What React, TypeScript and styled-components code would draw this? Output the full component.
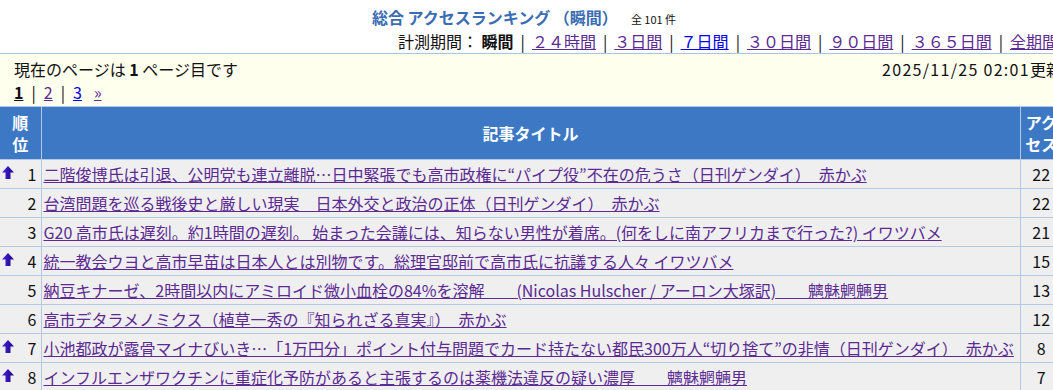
import React from "react";
import styled, { createGlobalStyle } from "styled-components";

const GlobalStyle = createGlobalStyle`
  html, body {
    margin: 0;
    padding: 0;
    background: #ffffff;
    overflow: hidden;
  }
  body {
    font-family: "Noto Sans CJK JP", "Noto Sans", sans-serif;
    font-size: 16px;
    color: #111111;
  }
  a { text-decoration: underline; }
`;

const Page = styled.div`
  width: 1062px;
`;

const TitleRow = styled.div`
  padding-top: 4px;
  height: 26px;
  line-height: 26px;
  text-align: center;
  padding-right: 14px;
`;

const Title = styled.span`
  font-weight: bold;
  font-size: 16px;
  color: #3b6db4;
`;

const Count = styled.span`
  font-size: 11px;
  margin-left: 13px;
  color: #111;
`;

const PeriodRow = styled.div`
  height: 23px;
  line-height: 23px;
  text-align: right;
  padding-right: 4px;
  white-space: nowrap;
`;

const Strong = styled.b`
  font-weight: bold;
`;

const Sep = styled.span`
  margin: 0 7px;
`;

const Link = styled.a<{ $visited?: boolean }>`
  color: ${(p) => (p.$visited ? "#5b2a92" : "#0000ee")};
  white-space: nowrap;
`;

const InfoBox = styled.div`
  border-top: 1px solid #a9c3e2;
  background: #ffffee;
  padding: 4px 0 2px 14px;
`;

const InfoLine = styled.div`
  display: flex;
  justify-content: space-between;
  height: 23px;
  line-height: 23px;
  white-space: nowrap;
`;

const Stamp = styled.span`
  letter-spacing: 1.3px;
`;

const Pager = styled.div`
  height: 23px;
  line-height: 23px;
  display: flex;
  align-items: center;
  gap: 8px;
`;

const Current = styled.a`
  color: #111;
  font-weight: bold;
`;

const Next = styled(Link)`
  margin-left: 4px;
`;

const Table = styled.table`
  width: 100%;
  border-collapse: collapse;
  table-layout: fixed;
`;

const Th = styled.th`
  background: #3c78c4;
  color: #ffffff;
  font-weight: bold;
  font-size: 16px;
  line-height: 22px;
  height: 53px;
  padding: 0 2px;
  border-top: 1px solid #b3c9e3;
  border-left: 1px solid #b3c9e3;
  text-align: center;
  box-sizing: border-box;
  &:first-child { border-left: none; }
`;

const Td = styled.td<{ $align?: string }>`
  background: #efefef;
  height: 28px;
  padding: 0 2px;
  border-top: 1px solid #b3c9e3;
  border-left: 1px solid #b3c9e3;
  text-align: ${(p) => p.$align || "left"};
  white-space: nowrap;
  overflow: hidden;
  box-sizing: content-box;
  line-height: 28px;
  &:first-child { border-left: none; }
`;

const RankCell = styled.div`
  display: flex;
  justify-content: space-between;
  align-items: center;
  padding-right: 2px;
`;

const ArrowBox = styled.span`
  display: inline-flex;
  width: 12px;
  height: 28px;
  align-items: flex-start;
  padding-top: 6px;
  box-sizing: border-box;
`;

const UpArrow = () => (
  <svg width="12" height="13" viewBox="0 0 12 13">
    <defs>
      <linearGradient id="ag" x1="0" y1="0" x2="1" y2="0">
        <stop offset="0" stopColor="#4a22e0" />
        <stop offset="1" stopColor="#1a0680" />
      </linearGradient>
    </defs>
    <path d="M6 0 L12 6.5 H8.5 V13 H3.5 V6.5 H0 Z" fill="url(#ag)" />
  </svg>
);

type Row = { rank: number; up: boolean; title: string; count: number };

const rows: Row[] = [
  { rank: 1, up: true, title: "二階俊博氏は引退、公明党も連立離脱…日中緊張でも高市政権に“パイプ役”不在の危うさ（日刊ゲンダイ）　赤かぶ", count: 22 },
  { rank: 2, up: false, title: "台湾問題を巡る戦後史と厳しい現実　日本外交と政治の正体（日刊ゲンダイ）　赤かぶ", count: 22 },
  { rank: 3, up: false, title: "G20 高市氏は遅刻。約1時間の遅刻。 始まった会議には、知らない男性が着席。(何をしに南アフリカまで行った?) イワツバメ", count: 21 },
  { rank: 4, up: true, title: "統一教会ウヨと高市早苗は日本人とは別物です。総理官邸前で高市氏に抗議する人々 イワツバメ", count: 15 },
  { rank: 5, up: false, title: "納豆キナーゼ、2時間以内にアミロイド微小血栓の84%を溶解　　(Nicolas Hulscher / アーロン大塚訳)　　魑魅魍魎男", count: 13 },
  { rank: 6, up: false, title: "高市デタラメノミクス（植草一秀の『知られざる真実』）　赤かぶ", count: 12 },
  { rank: 7, up: true, title: "小池都政が露骨マイナびいき…「1万円分」ポイント付与問題でカード持たない都民300万人“切り捨て”の非情（日刊ゲンダイ）　赤かぶ", count: 8 },
  { rank: 8, up: true, title: "インフルエンザワクチンに重症化予防があると主張するのは薬機法違反の疑い濃厚　　魑魅魍魎男", count: 7 },
];

const periods: { label: string; visited: boolean }[] = [
  { label: "２４時間", visited: true },
  { label: "３日間", visited: true },
  { label: "７日間", visited: false },
  { label: "３０日間", visited: true },
  { label: "９０日間", visited: true },
  { label: "３６５日間", visited: true },
  { label: "全期間", visited: true },
];

export default function App() {
  return (
    <Page>
      <GlobalStyle />
      <TitleRow>
        <Title>総合 アクセスランキング （瞬間）</Title>
        <Count>全 101 件</Count>
      </TitleRow>
      <PeriodRow>
        計測期間： <Strong>瞬間</Strong>
        {periods.map((p) => (
          <React.Fragment key={p.label}>
            <Sep>|</Sep>
            <Link href="#" $visited={p.visited}>{p.label}</Link>
          </React.Fragment>
        ))}
      </PeriodRow>
      <InfoBox>
        <InfoLine>
          <span>
            現在のページは <Strong>1</Strong> ページ目です
          </span>
          <span>
            <Stamp>2025/11/25 02:01</Stamp>更新
          </span>
        </InfoLine>
        <Pager>
          <Current href="#">1</Current>
          <span>|</span>
          <Link href="#" $visited>2</Link>
          <span>|</span>
          <Link href="#">3</Link>
          <Next href="#" $visited>»</Next>
        </Pager>
      </InfoBox>
      <Table>
        <colgroup>
          <col style={{ width: 41 }} />
          <col />
          <col style={{ width: 42 }} />
        </colgroup>
        <thead>
          <tr>
            <Th>順<br />位</Th>
            <Th>記事タイトル</Th>
            <Th>アクセス</Th>
          </tr>
        </thead>
        <tbody>
          {rows.map((r) => (
            <tr key={r.rank}>
              <Td>
                <RankCell>
                  <ArrowBox>{r.up ? <UpArrow /> : null}</ArrowBox>
                  <span>{r.rank}</span>
                </RankCell>
              </Td>
              <Td>
                <Link href="#" $visited>{r.title}</Link>
              </Td>
              <Td $align="center">{r.count}</Td>
            </tr>
          ))}
        </tbody>
      </Table>
    </Page>
  );
}
